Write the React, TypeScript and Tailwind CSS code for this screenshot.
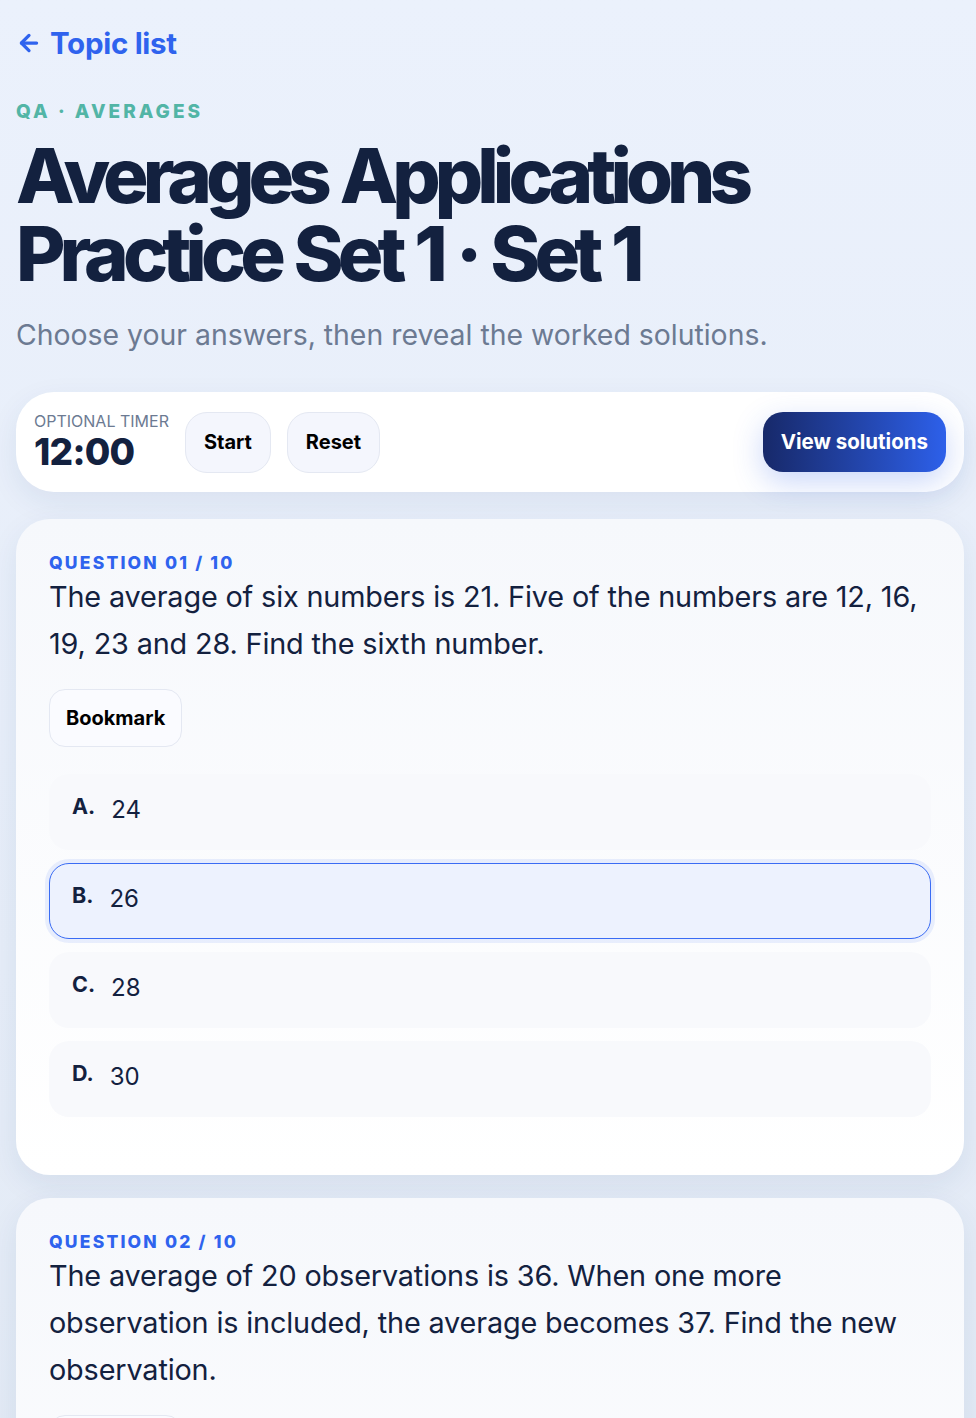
import { ArrowLeft } from "lucide-react";

const questions = [
  {
    n: "01",
    text: "The average of six numbers is 21. Five of the numbers are 12, 16, 19, 23 and 28. Find the sixth number.",
    options: ["24", "26", "28", "30"],
    selected: 1,
  },
  {
    n: "02",
    text: "The average of 20 observations is 36. When one more observation is included, the average becomes 37. Find the new observation.",
    options: ["57", "58", "59", "60"],
    selected: -1,
  },
];

function QuestionCard({ q }: { q: (typeof questions)[number] }) {
  return (
    <div className="rounded-[34px] bg-gradient-to-b from-[#f6f8fc] to-white px-[33px] pt-[32px] pb-[58px] shadow-[0_10px_30px_rgba(30,60,120,0.08)]">
      <div className="text-[17.5px] font-extrabold tracking-[0.125em] text-[#2f63ee] leading-[24px]">
        QUESTION {q.n} / 10
      </div>
      <p className="mt-[-2px] pr-[4px] text-[28.8px] leading-[47px] text-[#13213f] tracking-[-0.005em]">{q.text}</p>
      <button className="mt-[22px] h-[58px] rounded-[16px] border border-[#e4e8f2] bg-[#fafbff] px-[16px] text-[20px] font-bold text-black">
        Bookmark
      </button>
      <div className="mt-[27px] flex flex-col gap-[13px]">
        {q.options.map((opt, i) => {
          const sel = i === q.selected;
          return (
            <div
              key={opt}
              className={
                sel
                  ? "flex h-[76px] items-start gap-[16px] rounded-[20px] border border-[#3a6cf4] bg-[#edf2fe] px-[22px] pt-[17px] shadow-[0_0_0_4px_rgba(59,108,244,0.1)]"
                  : "flex h-[76px] items-start gap-[16px] rounded-[20px] border border-transparent bg-[#f8f9fc] px-[22px] pt-[17px]"
              }
            >
              <span className="text-[21.5px] font-bold text-[#13213f] leading-[28px]">
                {String.fromCharCode(65 + i)}.
              </span>
              <span className="mt-[4px] text-[24px] text-[#13213f] leading-[28px]">{opt}</span>
            </div>
          );
        })}
      </div>
    </div>
  );
}

export default function App() {
  return (
    <div
      className="min-h-screen bg-gradient-to-b from-[#ebf1fc] via-[#e6edf8] to-[#dfe7f2] px-[16px] pt-[26px] pb-10 overflow-hidden"
      style={{ fontFamily: "Inter, 'Noto Sans', sans-serif" }}
    >
      <a className="flex items-center gap-[8px] text-[29.5px] font-bold text-[#2f63ee] tracking-[-0.01em] leading-[34px]">
        <ArrowLeft className="h-[26px] w-[26px]" strokeWidth={3} />
        Topic list
      </a>
      <div className="mt-[40px] text-[19px] font-extrabold tracking-[0.16em] text-[#52b5a6] leading-[24px]">
        QA · AVERAGES
      </div>
      <h1 className="mt-[12px] text-[76px] font-extrabold leading-[78px] tracking-[-0.078em] [word-spacing:3px] text-[#13213f]">
        Averages Applications
        <br />
        Practice Set 1 · Set 1
      </h1>
      <p className="mt-[25px] text-[28.4px] text-[#6c7a92] leading-[36px]">
        Choose your answers, then reveal the worked solutions.
      </p>

      <div className="mt-[39px] mr-[-4px] flex h-[100px] items-center rounded-[38px] bg-white px-[18px] shadow-[0_10px_30px_rgba(30,60,120,0.08)]">
        <div className="flex flex-col">
          <span className="text-[16px] text-[#6c7a92] leading-[20px]">OPTIONAL TIMER</span>
          <span className="text-[37px] font-extrabold text-[#13213f] leading-[42px] tracking-[-0.02em]">12:00</span>
        </div>
        <button className="ml-[16px] h-[61px] w-[86px] rounded-[22px] border border-[#e4e8f2] bg-[#f4f6fd] text-[20px] font-bold text-black">
          Start
        </button>
        <button className="ml-[16px] h-[61px] w-[93px] rounded-[22px] border border-[#e4e8f2] bg-[#f4f6fd] text-[20px] font-bold text-black">
          Reset
        </button>
        <button className="ml-auto h-[60px] rounded-[20px] bg-gradient-to-r from-[#17296a] to-[#2d60ea] px-[18px] text-[20.5px] font-bold text-white shadow-[0_10px_30px_rgba(45,96,234,0.25)]">
          View solutions
        </button>
      </div>

      <div className="mt-[27px] mr-[-4px] flex flex-col gap-[23px]">
        {questions.map((q) => (
          <QuestionCard key={q.n} q={q} />
        ))}
      </div>
    </div>
  );
}
